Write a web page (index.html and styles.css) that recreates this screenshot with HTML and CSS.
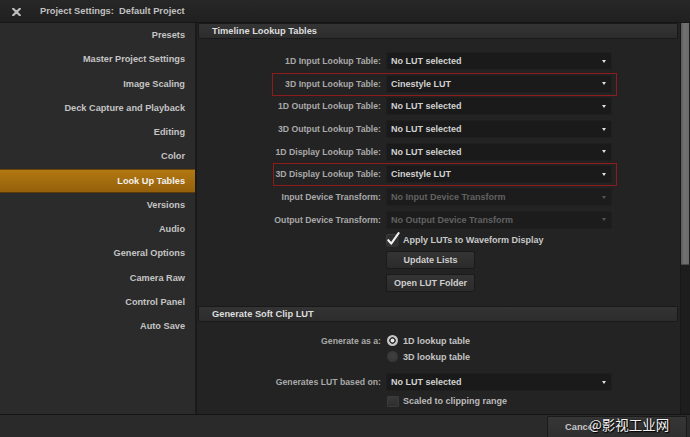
FILE: index.html
```html
<!DOCTYPE html>
<html>
<head>
<meta charset="utf-8">
<link rel="stylesheet" href="styles.css">
</head>
<body>
<div class="window">
  <div class="titlebar">
    <svg class="close" width="9" height="8" viewBox="0 0 9 8"><path d="M1.2 0.8 L7.8 7.2 M7.8 0.8 L1.2 7.2" stroke="#bdbdbd" stroke-width="2.2" stroke-linecap="round"/></svg>
    <span class="title">Project Settings:&nbsp; Default Project</span>
  </div>
  <div class="body">
    <nav class="sidebar">
      <div class="nav-item">Presets</div>
      <div class="nav-item">Master Project Settings</div>
      <div class="nav-item">Image Scaling</div>
      <div class="nav-item">Deck Capture and Playback</div>
      <div class="nav-item">Editing</div>
      <div class="nav-item">Color</div>
      <div class="nav-item active">Look Up Tables</div>
      <div class="nav-item">Versions</div>
      <div class="nav-item">Audio</div>
      <div class="nav-item">General Options</div>
      <div class="nav-item">Camera Raw</div>
      <div class="nav-item">Control Panel</div>
      <div class="nav-item">Auto Save</div>
    </nav>
    <div class="main">
      <div class="content">
        <div class="section-head">Timeline Lookup Tables</div>
        <div class="form form-lut">
          <div class="row"><span class="label">1D Input Lookup Table:</span><div class="select"><span>No LUT selected</span><i class="arrow"></i></div></div>
          <div class="row"><span class="label">3D Input Lookup Table:</span><div class="select"><span>Cinestyle LUT</span><i class="arrow"></i></div><span class="mark"></span></div>
          <div class="row"><span class="label">1D Output Lookup Table:</span><div class="select"><span>No LUT selected</span><i class="arrow"></i></div></div>
          <div class="row"><span class="label">3D Output Lookup Table:</span><div class="select"><span>No LUT selected</span><i class="arrow"></i></div></div>
          <div class="row"><span class="label">1D Display Lookup Table:</span><div class="select"><span>No LUT selected</span><i class="arrow"></i></div></div>
          <div class="row"><span class="label">3D Display Lookup Table:</span><div class="select"><span>Cinestyle LUT</span><i class="arrow"></i></div><span class="mark mark-wide"></span></div>
          <div class="row"><span class="label">Input Device Transform:</span><div class="select disabled"><span>No Input Device Transform</span><i class="arrow"></i></div></div>
          <div class="row"><span class="label">Output Device Transform:</span><div class="select disabled"><span>No Output Device Transform</span><i class="arrow"></i></div></div>
          <div class="row row-small"><span class="label"></span>
            <div class="check">
              <svg class="check-box" width="14" height="15" viewBox="0 0 14 15"><rect x="0.5" y="2.5" width="11.5" height="11.5" rx="1.5" fill="#2e2e2e" stroke="#3c3c3c"/><path d="M2.3 8.2 L5.2 11.6 L12.6 1.2" fill="none" stroke="#f2f2f2" stroke-width="2.1" stroke-linecap="round" stroke-linejoin="round"/></svg>
              <span class="check-text">Apply LUTs to Waveform Display</span>
            </div>
          </div>
          <div class="row"><span class="label"></span><button class="btn">Update Lists</button></div>
          <div class="row"><span class="label"></span><button class="btn">Open LUT Folder</button></div>
        </div>
        <div class="section-head section-two">Generate Soft Clip LUT</div>
        <div class="form form-soft">
          <div class="row row-small"><span class="label">Generate as a:</span><div class="radio-opt"><span class="radio on"></span><span class="opt-text">1D lookup table</span></div></div>
          <div class="row row-small row-tight"><span class="label"></span><div class="radio-opt"><span class="radio"></span><span class="opt-text">3D lookup table</span></div></div>
          <div class="row row-gap"><span class="label">Generates LUT based on:</span><div class="select"><span>No LUT selected</span><i class="arrow"></i></div></div>
          <div class="row row-small row-last"><span class="label"></span><div class="check"><span class="box-empty"></span><span class="check-text">Scaled to clipping range</span></div></div>
        </div>
      </div>
      <div class="scrollbar"><div class="thumb"></div></div>
    </div>
  </div>
  <div class="footer"><button class="btn-cancel">Cancel</button></div>
  <div class="watermark">@影视工业网</div>
</div>
</body>
</html>
```

FILE: styles.css
```css
* { box-sizing: border-box; }
html, body { margin: 0; padding: 0; }
body {
  background: #232323;
  font-family: "Liberation Sans", Arial, sans-serif;
  font-size: 9px;
  font-weight: 700;
  color: #c4c4c4;
}
.window {
  position: relative;
  width: 690px;
  height: 437px;
  display: flex;
  flex-direction: column;
  overflow: hidden;
}
.titlebar {
  height: 23px;
  flex: none;
  display: flex;
  align-items: center;
  padding-left: 12px;
  background: linear-gradient(#272727, #202020);
  border-bottom: 1px solid #161616;
}
.close { flex: none; margin-top: 1px; }
.title {
  margin-left: 19px;
  font-size: 9.3px;
  color: #c0c0c0;
}
.body {
  flex: 1;
  display: flex;
  min-height: 0;
}
.sidebar {
  width: 197px;
  flex: none;
  background: #2b2b2b;
  border-right: 2px solid #1a1a1a;
}
.nav-item {
  height: 24.25px;
  line-height: 24.25px;
  text-align: right;
  padding-right: 10px;
  font-size: 9.2px;
  color: #c4c4c4;
}
.nav-item.active {
  background: linear-gradient(#b27812, #94600a);
  color: #f2f2f2;
  border-top: 1px solid #6a4508;
  border-bottom: 1px solid #5a3a06;
  line-height: 22.25px;
}
.main {
  flex: 1;
  display: flex;
  background: #232323;
}
.content {
  flex: 1;
  padding: 0 2px 0 1px;
}
.section-head {
  height: 16px;
  border: 1px solid #191919;
  border-radius: 1px;
  background: linear-gradient(#343434, #2c2c2c);
  padding-left: 13px;
  line-height: 14px;
  font-size: 9.3px;
  color: #dedede;
}
.section-two { margin-top: 13.7px; }
.form-lut { margin-top: 13px; }
.row {
  position: relative;
  display: flex;
  align-items: center;
  height: 18px;
  margin-bottom: 4.7px;
}
.row:last-child { margin-bottom: 0; }
.row-small { height: 13px; }
.label {
  width: 183px;
  flex: none;
  text-align: right;
  margin-right: 5px;
  color: #a9a9a9;
  font-size: 8.7px;
  white-space: nowrap;
}
.select {
  width: 226px;
  height: 18px;
  display: flex;
  align-items: center;
  justify-content: space-between;
  padding: 0 4px 0 4px;
  background: #1a1a1a;
  border: 1px solid #1f1f1f;
  border-radius: 2px;
  color: #d2d2d2;
}
.arrow {
  width: 0;
  height: 0;
  border-left: 2.5px solid transparent;
  border-right: 2.5px solid transparent;
  border-top: 3.5px solid #e0e0e0;
  margin-right: 1px;
}
.select.disabled { color: #626262; background: #1c1c1c; }
.select.disabled .arrow { border-top-color: #555; }
.mark {
  position: absolute;
  left: 74px;
  top: -2px;
  width: 345px;
  bottom: -3px;
  border: 1px solid #8a1e1e;
  box-shadow: 0 0 1px #4a0e0e;
  pointer-events: none;
}
.mark-wide { left: 75px; width: 344px; }
.check {
  display: flex;
  align-items: center;
}
.check-box { flex: none; margin-top: -2px; }
.check-text {
  margin-left: 3px;
  color: #c8c8c8;
}
.btn {
  width: 89px;
  height: 18px;
  padding: 0;
  font-family: inherit;
  font-size: 9px;
  font-weight: 700;
  color: #cecece;
  background: linear-gradient(#343434, #2b2b2b);
  border: 1px solid #1a1a1a;
  border-radius: 2px;
}
.form-soft { margin-top: 12.8px; }
.row-tight { margin-top: -1.7px; }
.row-gap { margin-top: 9.8px; }
.row-last { margin-top: -1.2px; }
.radio-opt { display: flex; align-items: center; }
.radio {
  width: 11px;
  height: 11px;
  border-radius: 50%;
  margin-left: 1px;
  background: radial-gradient(circle at 50% 40%, #404040, #333333);
  flex: none;
}
.radio.on {
  background: radial-gradient(circle, #e6e6e6 0 1.6px, #3a3a3a 2.2px 3px, #c4c4c4 3.6px);
}
.opt-text { margin-left: 5px; color: #c4c4c4; }
.box-empty {
  width: 12px;
  height: 11px;
  margin-left: 1px;
  background: linear-gradient(#393939, #2e2e2e);
  border: 1px solid #3b3b3b;
  border-radius: 1px;
  flex: none;
}
.box-empty + .check-text { margin-left: 4px; color: #bbbbbb; }
.scrollbar {
  width: 10px;
  flex: none;
  background: #1d1d1d;
  border-left: 1px solid #161616;
  padding: 0 1px 0 0;
}
.thumb {
  height: 242px;
  background: linear-gradient(90deg, #5a5a5a, #717171 40%, #6a6a6a);
  border-bottom: 1px solid #4a4a4a;
}
.footer {
  height: 23px;
  flex: none;
  background: #2a2a2a;
  border-top: 1px solid #141414;
  display: flex;
  justify-content: flex-end;
  padding: 1px 3px 0 0;
}
.btn-cancel {
  width: 140px;
  height: 24px;
  padding: 0 0 2px 17px;
  text-align: left;
  font-family: inherit;
  font-size: 9.3px;
  font-weight: 700;
  color: #c6c6c6;
  background: linear-gradient(#363636, #2e2e2e);
  border: 1px solid #1a1a1a;
  border-radius: 2px;
}
.watermark {
  position: absolute;
  left: 589px;
  top: 414px;
  font-family: "Noto Sans CJK SC", sans-serif;
  font-weight: 400;
  font-size: 13.5px;
  color: #f4f4f4;
  text-shadow: 0 0 2px #000, 1px 1px 1px #000;
  white-space: nowrap;
}
```
